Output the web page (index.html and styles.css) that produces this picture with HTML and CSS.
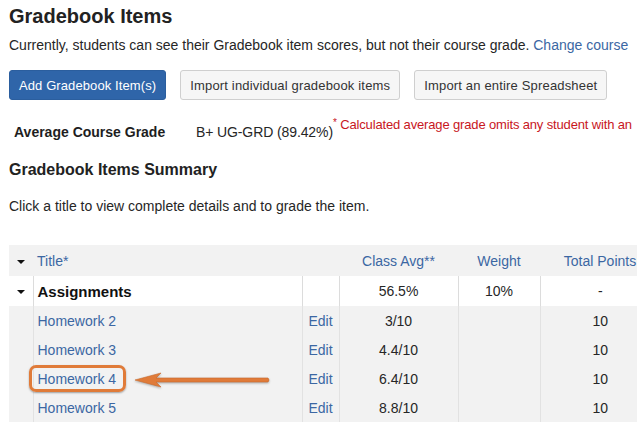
FILE: index.html
```html
<!DOCTYPE html>
<html lang="en">
<head>
<meta charset="utf-8">
<title>Gradebook Items</title>
<link rel="stylesheet" href="styles.css">
</head>
<body>
<div class="page">
  <h1 class="title">Gradebook Items</h1>
  <p class="intro">Currently, students can see their Gradebook item scores, but not their course grade. <a class="link" href="#">Change course</a></p>

  <div class="actions">
    <button class="btn btn-primary" type="button">Add Gradebook Item(s)</button>
    <button class="btn" type="button">Import individual gradebook items</button>
    <button class="btn" type="button">Import an entire Spreadsheet</button>
  </div>

  <div class="avg">
    <span class="avg-label">Average Course Grade</span>
    <span class="avg-value">B+ UG-GRD (89.42%)</span><span class="avg-note"><span class="star">*</span> Calculated average grade omits any student with an</span>
  </div>

  <h2 class="summary">Gradebook Items Summary</h2>
  <p class="hint">Click a title to view complete details and to grade the item.</p>

  <div class="table-wrap">
    <table class="items">
      <colgroup>
        <col class="c-caret">
        <col class="c-title">
        <col class="c-edit">
        <col class="c-avg">
        <col class="c-weight">
        <col class="c-total">
      </colgroup>
      <thead>
        <tr>
          <th class="caret-cell"><span class="caret"></span></th>
          <th class="left"><a class="link" href="#">Title*</a></th>
          <th></th>
          <th><a class="link" href="#">Class Avg**</a></th>
          <th><a class="link" href="#">Weight</a></th>
          <th><a class="link" href="#">Total Points</a></th>
        </tr>
      </thead>
      <tbody>
        <tr class="category">
          <td class="caret-cell"><span class="caret"></span></td>
          <td class="left cat-name">Assignments</td>
          <td></td>
          <td>56.5%</td>
          <td>10%</td>
          <td>-</td>
        </tr>
        <tr class="item">
          <td class="caret-cell"></td>
          <td class="left"><a class="link" href="#">Homework 2</a></td>
          <td class="left edit"><a class="link" href="#">Edit</a></td>
          <td>3/10</td>
          <td></td>
          <td>10</td>
        </tr>
        <tr class="item">
          <td class="caret-cell"></td>
          <td class="left"><a class="link" href="#">Homework 3</a></td>
          <td class="left edit"><a class="link" href="#">Edit</a></td>
          <td>4.4/10</td>
          <td></td>
          <td>10</td>
        </tr>
        <tr class="item">
          <td class="caret-cell"></td>
          <td class="left"><a class="link highlighted" href="#">Homework 4</a></td>
          <td class="left edit"><a class="link" href="#">Edit</a></td>
          <td>6.4/10</td>
          <td></td>
          <td>10</td>
        </tr>
        <tr class="item">
          <td class="caret-cell"></td>
          <td class="left"><a class="link" href="#">Homework 5</a></td>
          <td class="left edit"><a class="link" href="#">Edit</a></td>
          <td>8.8/10</td>
          <td></td>
          <td>10</td>
        </tr>
      </tbody>
    </table>
    <svg class="arrow" width="136" height="16" viewBox="0 0 136 16" aria-hidden="true">
      <path d="M0 8 L26 1 L21 6 L133 6 Q135 8 133 10 L21 10 L26 15 Z" fill="#e07b39" stroke="#c9692c" stroke-width="0.6" stroke-linejoin="round"/>
    </svg>
  </div>
</div>
</body>
</html>
```

FILE: styles.css
```css
html, body {
  margin: 0;
  padding: 0;
  background: #ffffff;
  overflow: hidden;
}

body {
  font-family: "Liberation Sans", Arial, sans-serif;
  font-size: 14px;
  color: #262626;
}

.page {
  padding-left: 9px;
  width: 700px;
}

.title {
  margin: 4px 0 0;
  font-size: 20px;
  line-height: 24px;
  font-weight: bold;
  color: #222222;
}

.intro {
  margin: 7px 0 0;
  line-height: 20px;
  white-space: nowrap;
}

.link {
  color: #3b67a3;
  text-decoration: none;
}

.actions {
  display: flex;
  gap: 14px;
  margin-top: 15px;
}

.btn {
  height: 30px;
  padding: 0 9px;
  border: 1px solid #cfcfcf;
  border-radius: 3px;
  background: #f6f6f6;
  color: #333333;
  font-family: "Liberation Sans", Arial, sans-serif;
  font-size: 13px;
  letter-spacing: 0.17px;
  cursor: pointer;
}

.btn-primary {
  background: #2f65a9;
  border-color: #2b5e9e;
  color: #ffffff;
  letter-spacing: 0.1px;
}

.avg {
  margin-top: 22px;
  padding-left: 5px;
  line-height: 20px;
  white-space: nowrap;
}

.avg-label {
  display: inline-block;
  width: 178px;
  font-weight: bold;
  color: #1e1e1e;
}

.avg-value {
  letter-spacing: -0.1px;
}

.avg-note {
  font-size: 13px;
  letter-spacing: -0.15px;
  color: #c8161d;
  vertical-align: 8px;
  line-height: 0;
}

.star {
  font-size: 10px;
  vertical-align: 3px;
}

.summary {
  margin: 18px 0 0;
  font-size: 16px;
  line-height: 20px;
  font-weight: bold;
  color: #222222;
}

.hint {
  margin: 16px 0 0;
  line-height: 20px;
}

.table-wrap {
  position: relative;
  margin-top: 29px;
}

.items {
  border-collapse: collapse;
  table-layout: fixed;
  width: 651px;
}

.c-caret { width: 24px; }
.c-title { width: 269px; }
.c-edit { width: 37px; }
.c-avg { width: 119px; }
.c-weight { width: 82px; }
.c-total { width: 120px; }

.items th,
.items td {
  padding: 0 4px;
  text-align: center;
  vertical-align: middle;
  white-space: nowrap;
  font-weight: normal;
}

.items th.left,
.items td.left {
  text-align: left;
}

.items td.edit {
  padding-left: 6px;
}

.items thead tr {
  height: 31px;
  background: #f2f2f2;
}

.items tbody tr {
  height: 29px;
  background: #f2f2f2;
}

.items tbody tr.category {
  height: 30px;
  background: #ffffff;
}

.items tbody td + td {
  border-left: 1px solid #e2e2e2;
}

.items tbody tr.category td + td {
  border-left-color: #dcdcdc;
}

.items .caret-cell {
  padding: 0;
}

.caret {
  display: inline-block;
  width: 0;
  height: 0;
  border-left: 4px solid transparent;
  border-right: 4px solid transparent;
  border-top: 4px solid #111111;
  vertical-align: middle;
}

.items td.cat-name {
  font-size: 15px;
  font-weight: bold;
  color: #111111;
}

.highlighted {
  position: relative;
}

.highlighted::after {
  content: "";
  position: absolute;
  left: -9px;
  right: -10px;
  top: -6px;
  bottom: -5px;
  border: 3px solid #e07b39;
  border-radius: 7px;
  box-shadow: 0 1px 2px rgba(0, 0, 0, 0.35);
}

.arrow {
  position: absolute;
  left: 126px;
  top: 127px;
  filter: drop-shadow(0 1px 1px rgba(0, 0, 0, 0.3));
}
```
